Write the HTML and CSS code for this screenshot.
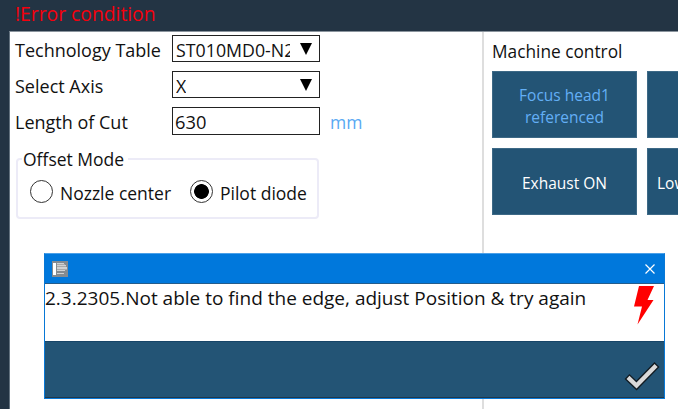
FILE: index.html
```html
<!DOCTYPE html>
<html lang="en">
<head>
<meta charset="utf-8">
<title>Machine control</title>
<link rel="stylesheet" href="styles.css">
</head>
<body>
<header class="alert"><span>!Error condition</span></header>
<main class="panel">
  <section class="settings">
    <div class="row"><label>Technology Table</label><div class="field"><span class="value clipped">ST010MD0-N2</span><svg class="arrow" viewBox="0 0 12 12"><path d="M0 0h12L6 12z"/></svg></div></div>
    <div class="row row-axis"><label>Select Axis</label><div class="field"><span class="value">X</span><svg class="arrow" viewBox="0 0 12 12"><path d="M0 0h12L6 12z"/></svg></div></div>
    <div class="row row-cut"><label>Length of Cut</label><div class="field"><span class="value number">630</span></div><span class="unit">mm</span></div>
    <fieldset class="mode">
      <legend>Offset Mode</legend>
      <div class="options">
        <span class="radio"></span><span class="option first">Nozzle center</span>
        <span class="radio on"></span><span class="option">Pilot diode</span>
      </div>
    </fieldset>
  </section>
  <section class="controls">
    <h2><span>Machine control</span></h2>
    <div class="buttons">
      <div class="button active"><span>Focus head1</span><span>referenced</span></div>
      <div class="button"></div>
      <div class="button"><span>Exhaust ON</span></div>
      <div class="button cut"><span>Low</span></div>
    </div>
  </section>
</main>
<div class="dialog">
  <div class="titlebar">
    <svg class="app" viewBox="0 0 16 16"><path fill="#858b90" d="M0 0h16v16H0z"/><path fill="#fff" d="M1 2h3v12H1z"/><path fill="#d0d2d3" d="M5 2h7v1H5zM5 4h9v1H5zM5 6h10v2H5zM5 9h8v1H5zM5 12h7v1H5z"/><path fill="#aaa" d="M5 3h8v1H5zM5 5h9v1H5zM5 8h10v1H5z"/></svg>
    <svg class="close" viewBox="0 0 10 10"><path d="M.5.5l9 9M9.500.5l-9 9"/></svg>
  </div>
  <div class="message"><span>2.3.2305.Not able to find the edge, adjust Position &amp; try again</span>
    <svg class="bolt" viewBox="0 0 20 39"><path d="M5 0h15l-6.500 14H19.500L3.500 38.500 8 20.500H0z"/></svg>
  </div>
  <div class="footer"><svg class="check" viewBox="0 0 35 28"><path class="outline" d="M2 14.500l9.500 9L32 2.500"/><path class="fill" d="M3 15.400l8.500 8.100L31.100 3.400"/></svg></div>
</div>
</body>
</html>
```
FILE: styles.css
```css
* { box-sizing: border-box; }
body {
  margin: 0;
  width: 678px;
  height: 409px;
  overflow: hidden;
  position: relative;
  background: #233444;
  color: #111;
  font: 18px/26px "Open Sans", "Noto Sans", sans-serif;
  white-space: nowrap;
}
.alert { height: 31px; padding: 1px 0 0 15px; color: #f5000d; font-size: 19.300px; }
.panel {
  display: flex;
  height: 378px;
  margin-left: 9px;
  background: #fff;
  border-left: 1px solid #62717e;
  border-top: 1px solid #8a949d;
}
.settings { width: 472px; flex: none; padding: 3px 0 0 5px; }
.row { display: flex; align-items: center; height: 27px; }
.row label { width: 157px; flex: none; padding-top: 2px; }
.row-axis { margin-top: 9px; }
.row-cut { margin-top: 9px; height: 28px; }
.field {
  display: flex;
  align-items: center;
  justify-content: space-between;
  width: 148px;
  height: 100%;
  padding: 2px 7px 0 3px;
  border: 1px solid #222;
}
.value { overflow: hidden; font-size: 17.800px; }
.number { margin-left: -1px; font-size: 18.300px; }
.clipped { width: 114px; }
.arrow { width: 12px; height: 12px; margin-top: -2px; flex: none; }
.unit { margin: 2px 0 0 10px; color: #58a9f3; font-size: 17.500px; }
.mode {
  width: 303px;
  height: 73px;
  margin: 11px 0 0 1px;
  padding: 0 4px;
  border: 2px solid #ecebf7;
  border-radius: 4px;
}
.mode legend { padding: 0 4px 0 1px; height: 26px; font-size: 17.500px; }
.options { display: flex; align-items: center; height: 28px; margin-top: 7px; padding-left: 8px; }
.radio { width: 23px; height: 23px; flex: none; margin-top: -3px; border: 1.500px solid #333; border-radius: 50%; }
.on { background: radial-gradient(circle, #000 0 7px, #fff 7.700px); }
.option { margin-left: 7px; font-size: 17.500px; }
.first { width: 130px; }
.controls { flex: 1; overflow: hidden; border-left: 2px solid #dedede; padding: 7px 0 0 8px; }
h2 { margin: 0; height: 32px; font-size: 17.300px; font-weight: 400; line-height: 26px; }
.buttons { display: grid; grid-template-columns: 145px 145px; grid-auto-rows: 67px; gap: 10px; }
.button {
  display: flex;
  flex-direction: column;
  align-items: center;
  justify-content: center;
  padding-top: 2px;
  background: #235475;
  border: 1px solid #3d6986;
  color: #fff;
  font-size: 15.500px;
  line-height: 22px;
}
.active { color: #63aff6; }
.cut { align-items: flex-start; padding-left: 9px; }
.dialog {
  position: absolute;
  left: 44px;
  top: 253px;
  width: 621px;
  height: 146px;
  border: 1px solid #0878d6;
  border-top-color: #4ba0e8;
  background: #235475;
}
.titlebar { display: flex; align-items: center; justify-content: space-between; height: 30px; padding: 0 9px 0 7px; background: #0078dc; border-bottom: 1px solid #245c8b; }
.app { width: 16px; height: 16px; }
.close { width: 10px; height: 10px; fill: none; stroke: #fff; stroke-width: 1.200; }
.message { display: flex; justify-content: space-between; height: 58px; padding: 1px 10px 0 0; background: #fff; border-bottom: 1px solid #174568; font-size: 19px; }
.bolt { width: 20px; height: 39px; margin-top: 1px; fill: red; }
.footer { display: flex; justify-content: flex-end; height: 56px; padding: 20px 4px 0 0; border-bottom: 1px solid #21384a; }
.check { width: 35px; height: 28px; fill: none; overflow: visible; }
.outline { stroke: #111b22; stroke-width: 7; }
.fill { stroke: #d9d9d9; stroke-width: 4.300; }
```
